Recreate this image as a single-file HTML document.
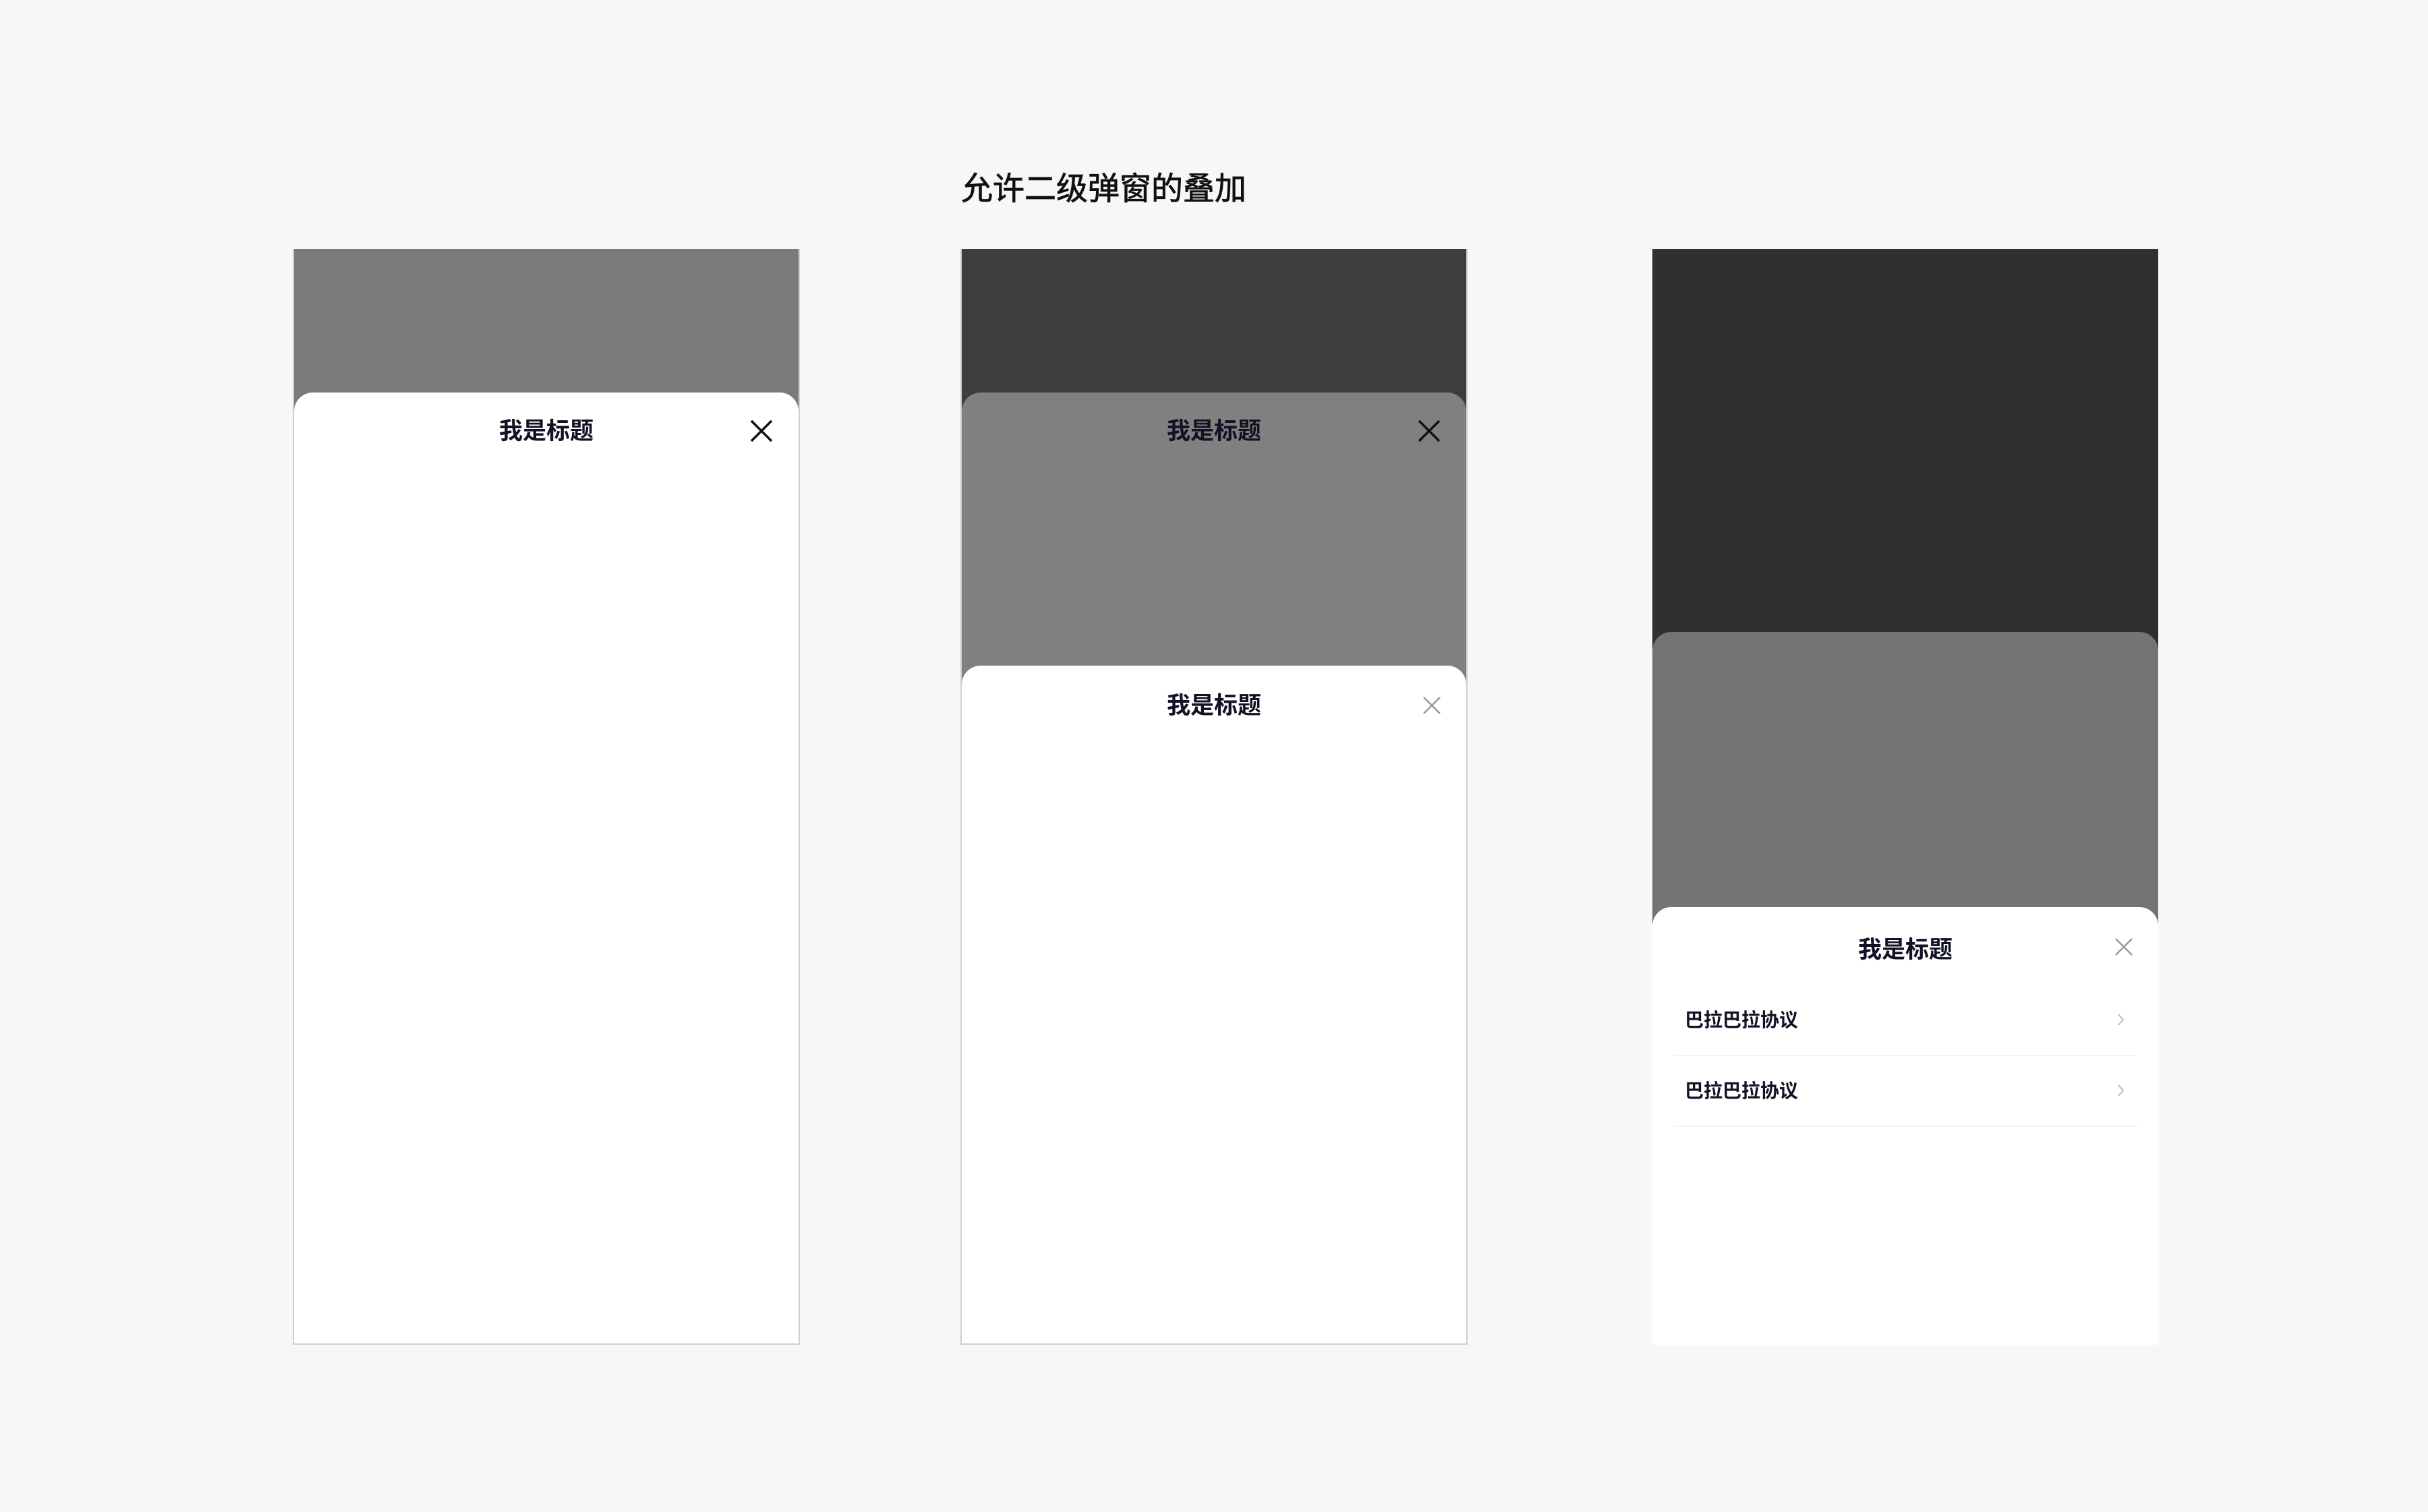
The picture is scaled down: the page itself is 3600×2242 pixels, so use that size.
<!DOCTYPE html>
<html><head><meta charset="utf-8"><style>
*{margin:0;padding:0;box-sizing:border-box}
body{width:3600px;height:2242px;background:#f7f7f7;position:relative;overflow:hidden;font-family:"Liberation Sans","Noto Sans CJK SC",sans-serif}
.abs{position:absolute}
.phone{position:absolute;top:369px;height:1625px;overflow:hidden}
.sheet{position:absolute;left:0;right:0;bottom:0;border-radius:28px 28px 0 0}
.t{position:absolute;left:0;right:0;text-align:center;font-size:35px;font-weight:bold;color:#111325;line-height:40px}
.x{position:absolute}
.row{position:absolute;left:32px;right:32px;height:105px;border-bottom:2px solid #f2f2f2}
.row span{position:absolute;left:16px;top:32px;font-size:28px;font-weight:bold;color:#111325;line-height:40px}
.row svg{position:absolute;right:18px;top:42px}
</style></head><body>
<div class="abs" style="left:1425px;top:252px;font-size:47px;color:#111;line-height:56px;-webkit-text-stroke:0.8px #111">允许二级弹窗的叠加</div>

<div class="phone" style="left:434px;width:752px;background:#7b7b7b;border:2px solid #d0d0d0;border-top:none">
 <div class="sheet" style="top:213px;background:#fff">
  <div class="t" style="top:38px">我是标题</div>
  <svg class="x" style="left:676px;top:40px" width="34" height="34" viewBox="0 0 34 34"><path d="M2 2L32 32M32 2L2 32" stroke="#111" stroke-width="3.5"/></svg>
 </div>
</div>

<div class="phone" style="left:1424px;width:752px;background:#3d3d3d;border:2px solid #d0d0d0;border-top:none">
 <div class="sheet" style="top:213px;background:#808080">
  <div class="t" style="top:38px">我是标题</div>
  <svg class="x" style="left:676px;top:40px" width="34" height="34" viewBox="0 0 34 34"><path d="M2 2L32 32M32 2L2 32" stroke="#111" stroke-width="3.5"/></svg>
 </div>
 <div class="sheet" style="top:618px;background:#fff">
  <div class="t" style="top:40px">我是标题</div>
  <svg class="x" style="left:684px;top:46px" width="26" height="26" viewBox="0 0 26 26"><path d="M1 1L25 25M25 1L1 25" stroke="#999" stroke-width="2.5"/></svg>
 </div>
</div>

<div class="phone" style="left:2450px;width:750px;background:#303030">
 <div class="sheet" style="top:568px;background:#747474"></div>
 <div class="sheet" style="top:976px;background:#fff">
  <div class="t" style="top:44px">我是标题</div>
  <svg class="x" style="left:686px;top:46px" width="26" height="26" viewBox="0 0 26 26"><path d="M1 1L25 25M25 1L1 25" stroke="#999" stroke-width="2.5"/></svg>
  <div class="row" style="top:116px"><span>巴拉巴拉协议</span><svg width="10" height="18" viewBox="0 0 10 18"><path d="M1 1L8 9L1 17" stroke="#bbb" stroke-width="2" fill="none"/></svg></div>
  <div class="row" style="top:221px"><span>巴拉巴拉协议</span><svg width="10" height="18" viewBox="0 0 10 18"><path d="M1 1L8 9L1 17" stroke="#bbb" stroke-width="2" fill="none"/></svg></div>
 </div>
</div>
</body></html>
